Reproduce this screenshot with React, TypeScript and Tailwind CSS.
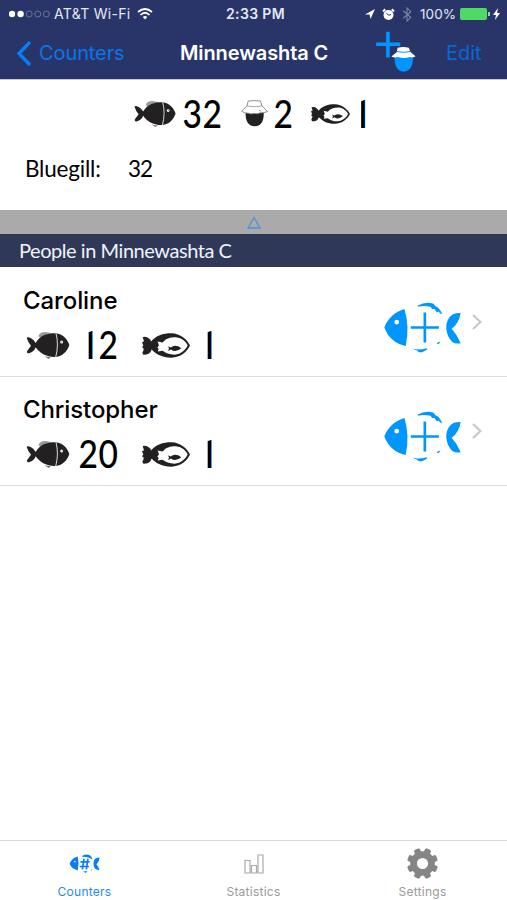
import React from 'react';
import clsx from 'clsx';

interface Person {
  id: string;
  name: string;
  kept: string;
  released: string;
}

const PEOPLE: Person[] = [
  { id: 'caroline', name: 'Caroline', kept: '12', released: '1' },
  { id: 'christopher', name: 'Christopher', kept: '20', released: '1' },
];

function FishIcon({ className }: { className?: string }) {
  return (
    <svg viewBox="0 0 130 84" className={className} fill="#222021">
      <path d="M36 16Q40 3 57 3Q71 4 81 10Q57 10 44 20Z" fill="#999" />
      <path d="M1 20Q4 16 14 22Q24 27 28 36C42 12 64 7 88 7C110 9 124 26 129 42C122 62 110 75 88 78C60 79 40 66 28 49Q24 62 8 67Q-1 66 3 59L14 44Q5 34 1 20Z" />
      <path d="M54 76Q64 79 74 78L67 84Z" fill="#777" />
      <path d="M89 7Q98 41 88 79" fill="none" stroke="#fff" strokeWidth="2.5" />
      <circle cx="106" cy="33" r="4.5" fill="#fff" />
      <circle cx="107" cy="33" r="1.5" />
    </svg>
  );
}

function ReleasedIcon({ className }: { className?: string }) {
  return (
    <svg viewBox="0 0 144 76" preserveAspectRatio="none" className={className} fill="#222021">
      <path d="M2 12Q14 9 20 16Q27 20 27 26C42 8 62 1 88 1C116 2 135 20 144 38C134 58 116 74 88 75C60 75 42 64 29 50Q25 66 4 66L1 60Q6 52 5 47L0 43L4 38L0 28L6 25Q4 19 2 12Z" />
      <path d="M47 26L62 29C71 17 84 13 102 13C121 15 132 27 137 38C130 52 117 64 98 66C82 66 70 60 62 54L47 56L50 49L46 44L51 38Z" fill="#fff" />
      <path d="M78 40L86 44Q100 33 118 46Q100 61 87 50L78 55L81 47Z" />
    </svg>
  );
}

function BucketIcon({ className }: { className?: string }) {
  return (
    <svg viewBox="0 0 82 80" className={className}>
      <path d="M14 36C13 58 19 78 42 79C64 78 70 58 69 36Z" fill="#222021" />
      <path d="M22 2Q40 0 59 2L64 17L81 34Q68 39 59 38Q50 43 40 40Q29 43 22 39Q10 40 2 33L18 17Z" fill="#fff" stroke="#777" strokeWidth="2.5" />
      <path d="M18 17Q40 22 64 17M54 30l8 3" fill="none" stroke="#888" strokeWidth="2.2" />
    </svg>
  );
}

function AddBucketIcon() {
  return (
    <svg viewBox="0 0 120 124" className="-mt-[3px] h-[41px] w-[40px]">
      <path d="M30 2H41V35H73V45H41V80H30V45H0V35H30Z" fill="#0096ff" />
      <path d="M56 77C54 102 62 122 83 123C105 122 112 102 111 77Z" fill="#0096ff" />
      <path d="M65 51Q82 46 99 51L103 63L119 76Q111 81 103 79Q84 85 66 79Q54 82 46 77L62 64Z" fill="#fff" />
      <path d="M63 62Q82 67 103 62" fill="none" stroke="#0096ff" strokeWidth="3" />
    </svg>
  );
}

function AddFishIcon({ className }: { className?: string }) {
  return (
    <svg viewBox="0 0 230 152" className={className} fill="#0096ff">
      <path fillRule="evenodd" d="M61 21Q77 72 65 131C35 126 12 106 1 76C12 48 33 29 61 21ZM38 53a7 7 0 1 0 0 14a7 7 0 1 0 0-14Z" />
      <path d="M101 10Q125-2 148 5Q151 13 162 17Q171 27 174 36L168 34L163 28L158 31L151 21L144 21L139 14Q119 9 101 14Z" />
      <path d="M118 31H126V72H164V80H126V121H118V80H80V72H118Z" />
      <path d="M87 139Q103 145 127 138L129 142L114 150H104L99 145Q91 144 87 139ZM156 122L169 118L163 126Z" />
      <path d="M229 33Q206 32 195 46Q185 60 186 79Q188 104 204 119Q214 126 229 123Q219 98 202 80Q224 65 229 33Z" />
    </svg>
  );
}

function CounterTabIcon() {
  return (
    <svg viewBox="0 0 93 58" className="h-[19px] w-[31px]" fill="#087df8">
      <path fillRule="evenodd" d="M26 8Q31 29 26 50C13 47 5 40 1 30C5 19 14 11 26 8ZM15 21v4h4v-4Z" />
      <path d="M40 5Q53-1 62 4Q69 7 71 17Q57 7 40 9Z" />
      <path d="M45 14L40 47M57 14L52 47M34 24H62M32 38H60" stroke="#087df8" strokeWidth="5" />
      <path d="M43 53H56L49 58ZM66 48H71L67 51ZM92 11Q74 10 74 30Q74 50 92 49Q89 37 83 31Q92 24 92 11Z" />
    </svg>
  );
}

function Gear() {
  return (
    <svg viewBox="0 0 92 92" className="size-[31px]" fill="#858585">
      {[22.5, 67.5, 112.5, 157.5, 202.5, 247.5, 292.5, 337.5].map((a) => (
        <rect key={a} x="36.5" y="0" width="19" height="20" rx="5" transform={`rotate(${a} 46 46)`} />
      ))}
      <circle cx="46" cy="46" r="26.5" fill="none" stroke="#858585" strokeWidth="20" />
    </svg>
  );
}

// The digit one is set as a bare stem: its flag is masked off.
function Digit({ value }: { value: string }) {
  return (
    <span className="flex w-[19.5px] shrink-0 justify-center">
      {value === '1' ? (
        <span className="mt-px font-['Roboto'] font-medium [clip-path:inset(0_0_0_11px)]">1</span>
      ) : (
        <span className="-mt-px scale-x-[0.86]">{value}</span>
      )}
    </span>
  );
}

function Count({ value, className }: { value: string; className?: string }) {
  return (
    <span className={clsx("flex h-[38px] font-['Lato'] text-[39px] leading-[38px] font-medium text-black", className)}>
      {value.split('').map((d, i) => <Digit key={i} value={d} />)}
    </span>
  );
}

function StatusBar() {
  return (
    <div className="flex h-7 items-center pr-[6px] pl-[9px] text-[13px] text-[#e5e8f4]">
      <svg viewBox="0 0 42 8" className="h-2 w-[42px]">
        <circle cx="3" cy="4" r="3.2" fill="#fff" />
        <circle cx="11.6" cy="4" r="3.2" fill="#fff" />
        <g fill="none" stroke="#7c83a7" strokeWidth="0.8">
          <circle cx="20.2" cy="4" r="3" />
          <circle cx="28.8" cy="4" r="3" />
          <circle cx="37.4" cy="4" r="3" />
        </g>
      </svg>
      <span className="ml-[3px] w-[78px] pb-px text-[14px] leading-5 tracking-[0.3px] whitespace-nowrap">AT&amp;T Wi-Fi</span>
      <svg viewBox="0 0 16 12" className="-mt-px ml-[5px] h-3 w-4" fill="none" stroke="#fff" strokeWidth="1.7">
        <path d="M1 4Q8-2 15 4M3.5 7Q8 2.5 12.5 7" />
        <path d="M5.8 9Q8 7 10.2 9L8 11.5Z" fill="#fff" stroke="none" />
      </svg>
      <span className="ml-[73px] w-[62px] pb-px text-[14px] leading-5 font-semibold tracking-[0.35px] whitespace-nowrap">2:33 PM</span>
      <svg viewBox="0 0 11 11" className="ml-[77px] size-[10px]" fill="#fff"><path d="M0 6L11 0L6 11L5 6Z" /></svg>
      <svg viewBox="0 0 13 13" className="ml-[7px] size-[13px]">
        <circle cx="6.5" cy="7" r="5" fill="#fff" />
        <path d="M1 3.5L3.2 1.3M9.8 1.3L12 3.5" stroke="#fff" strokeWidth="2" />
        <path d="M4.5 5L6.5 7.3L9 6.5" fill="none" stroke="#293569" />
      </svg>
      <svg viewBox="0 0 10 16" className="ml-[7px] h-[15px] w-[10px]" fill="none" stroke="#8087aa" strokeWidth="1.1">
        <path d="M1 4L9 11L5 15V1L9 5L1 12" />
      </svg>
      <span className="ml-[8px] w-[37px] pb-px text-[13.5px] leading-5 tracking-[0.1px] whitespace-nowrap">100%</span>
      <span className="ml-[3px] h-3 w-[27px] rounded-[2px] bg-[#50d964]" />
      <span className="ml-px h-1 w-[1.5px] bg-[#8bd9a0]" />
      <svg viewBox="0 0 7 12" className="ml-[3px] h-3 w-[7px]" fill="#fff"><path d="M5 0L0 7H3L2 12L7 5H4Z" /></svg>
    </div>
  );
}

function NavBar() {
  return (
    <div className="flex h-[51px] items-center pb-px text-[20px] leading-6">
      <svg viewBox="0 0 15 25" className="ml-[16px] h-[25px] w-[15px]" fill="none" stroke="#087df8" strokeWidth="3.4">
        <path d="M14 1L3 12.5L14 24" />
      </svg>
      <span className="ml-[8px] w-[141px] tracking-[-0.1px] text-[#0876e8]">Counters</span>
      <span className="w-[196px] font-semibold tracking-[-0.1px] whitespace-nowrap text-white">Minnewashta C</span>
      <AddBucketIcon />
      <span className="ml-[30px] text-[#0867d2]">Edit</span>
    </div>
  );
}

function PersonRow({ person }: { person: Person }) {
  return (
    <div className="flex h-[109px] border-b border-[#dedede] bg-white">
      <div className="w-[383.5px] pt-[19px] pl-[23px]">
        <p className="text-[24px] leading-[27px] font-medium tracking-[-0.1px] text-black">{person.name}</p>
        <div className="mt-[12px] flex items-center pl-[3px]">
          <FishIcon className="h-[28px] w-[44px]" />
          <Count value={person.kept} className="ml-[9px]" />
          <ReleasedIcon className="ml-[24px] h-[25px] w-[48px]" />
          <Count value={person.released} className="ml-[8px]" />
        </div>
      </div>
      <AddFishIcon className="mt-[34px] h-[51px] w-[77px]" />
      <svg viewBox="0 0 10 16" className="mt-[46px] ml-[11.5px] h-4 w-[10px]" fill="none" stroke="#c6c6ca" strokeWidth="2">
        <path d="M1 1L8.5 8L1 15" />
      </svg>
    </div>
  );
}

function Tab({ label, active, children }: { label: string; active?: boolean; children: React.ReactNode }) {
  return (
    <div className="flex w-[169px] flex-col items-center">
      <div className="flex h-[45px] items-center">{children}</div>
      <span className={clsx('text-[12px] leading-[12px] tracking-[0.25px]', active ? 'text-[#2589f5]' : 'text-[#999]')}>{label}</span>
    </div>
  );
}

export default function App() {
  return (
    <div className="flex h-[900px] w-[507px] flex-col overflow-hidden bg-white font-['Inter',sans-serif]">
      <header className="h-[79px] shrink-0 bg-[#293569]">
        <StatusBar />
        <NavBar />
      </header>

      <section className="h-[131px] shrink-0 border-t border-[#c5c9d8]">
        <div className="flex h-[67px] items-center">
          <FishIcon className="ml-[134px] h-[27px] w-[42px]" />
          <Count value="32" className="ml-[7px]" />
          <BucketIcon className="ml-[19px] h-[27px] w-[27px]" />
          <Count value="2" className="ml-[6px]" />
          <ReleasedIcon className="ml-[17px] h-[20px] w-[39px]" />
          <Count value="1" className="ml-[2px]" />
        </div>
        <p className="flex pt-[7px] pl-[25px] font-['Lato'] text-[22.5px] leading-[30px] text-black">
          <span className="w-[103px] tracking-[-0.2px]">Bluegill:</span>
          <span className="tracking-[-1px]">32</span>
        </p>
      </section>

      <div className="flex h-[24px] shrink-0 items-center justify-center bg-[#aaa]">
        <svg viewBox="0 0 14 13" className="h-[13px] w-[14px]" fill="none" stroke="#4a91dc" strokeWidth="1.3">
          <path d="M7 1.5L13 12H1Z" />
        </svg>
      </div>
      <div className="h-[33px] shrink-0 bg-[#303858] pl-[19px] font-['Lato'] text-[20px] leading-[32px] tracking-[-0.45px] text-[#f0f3fc]">
        People in Minnewashta C
      </div>

      <main className="flex-1 pt-px">
        {PEOPLE.map((p) => <PersonRow key={p.id} person={p} />)}
      </main>

      <nav className="flex h-[60px] shrink-0 border-t border-[#d8d8d8] bg-white">
        <Tab label="Counters" active><CounterTabIcon /></Tab>
        <Tab label="Statistics">
          <svg viewBox="0 0 20 20" className="size-5" fill="none" stroke="#aaa" strokeWidth="1.2">
            <path d="M1 6.5H6V19H1ZM7.5 11.5H12.5V19H7.5ZM14 1H19V19H14Z" />
          </svg>
        </Tab>
        <Tab label="Settings"><Gear /></Tab>
      </nav>
    </div>
  );
}
